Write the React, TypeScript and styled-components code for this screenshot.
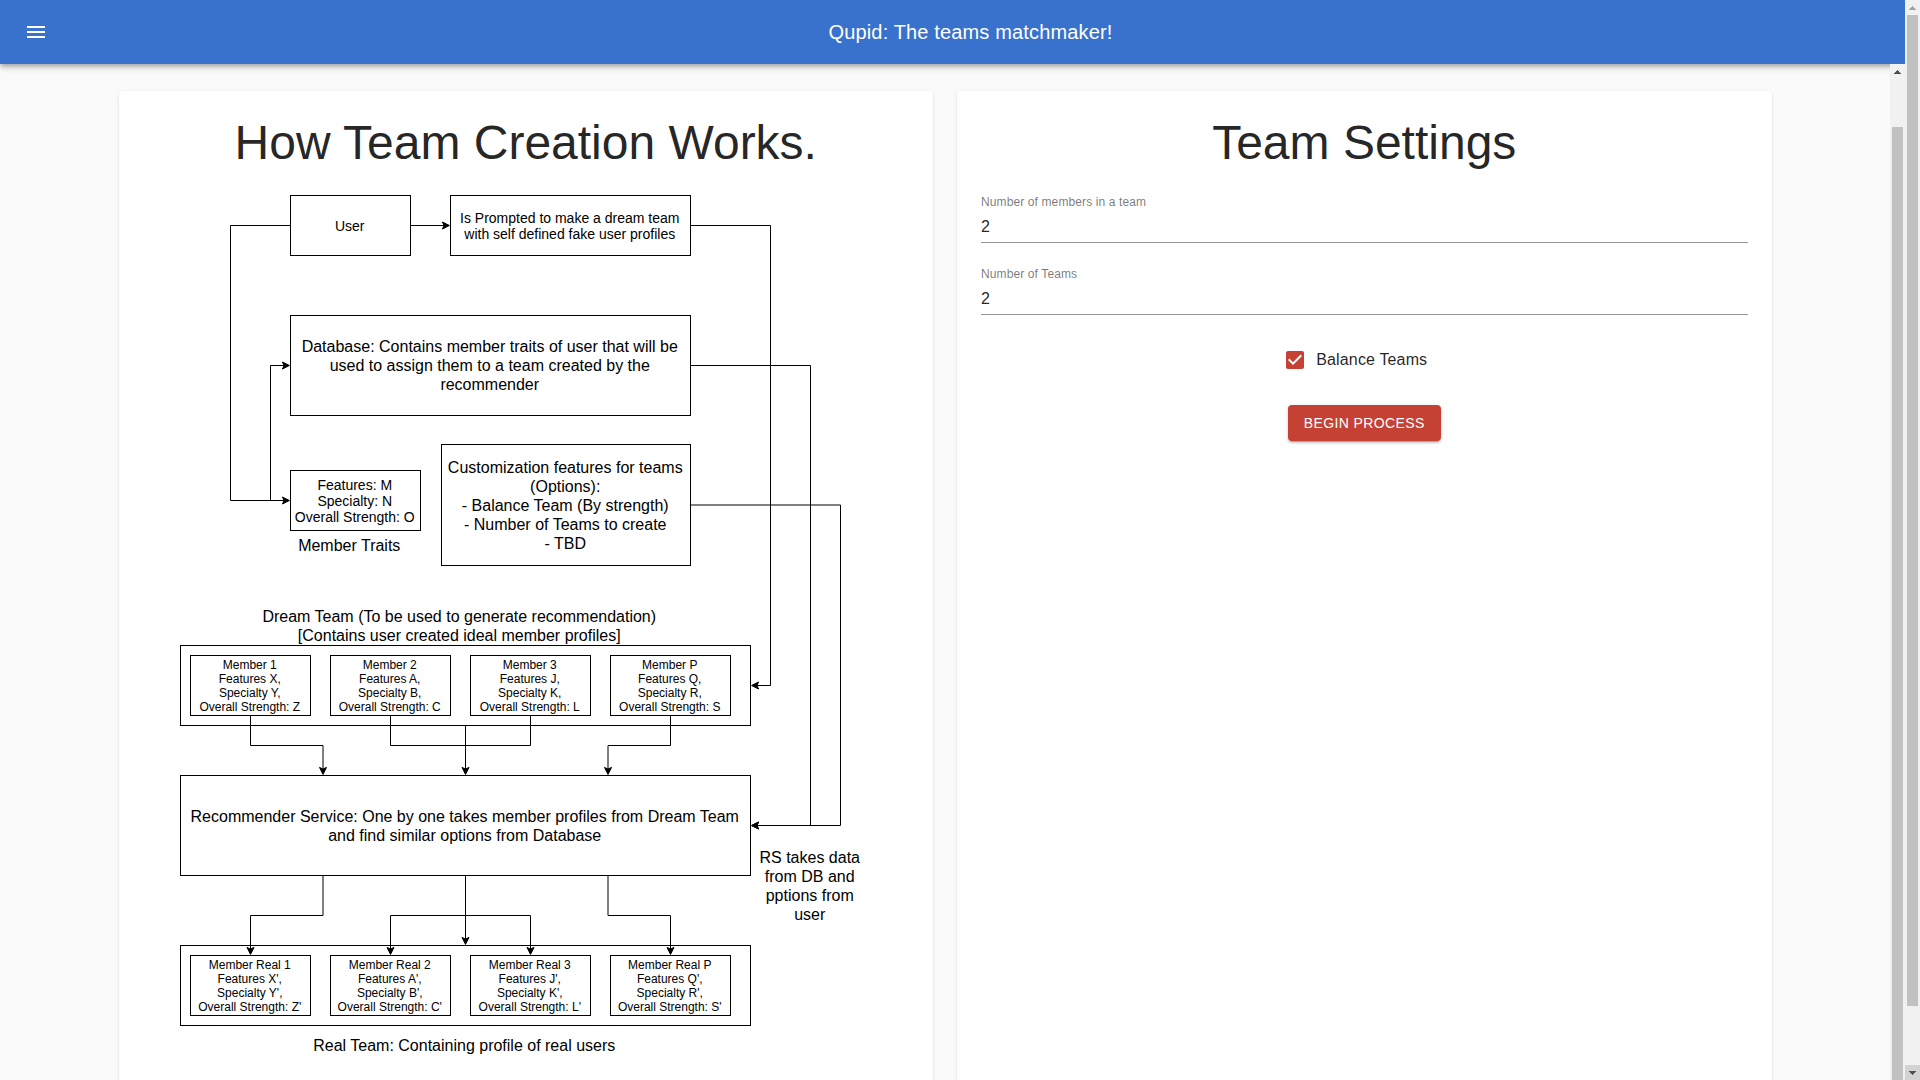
import React, { useState } from "react";
import styled, { createGlobalStyle } from "styled-components";

const GlobalStyle = createGlobalStyle`
  *, *::before, *::after { box-sizing: border-box; }
  body {
    margin: 0;
    background: #fafafa;
    color: rgba(0, 0, 0, 0.87);
    font-family: "Liberation Sans", Arial, sans-serif;
    font-size: 16px;
  }
`;

const Page = styled.div`
  display: flex;
  height: 100vh;
  overflow: hidden;
`;

const Shell = styled.div`
  flex: 1;
  min-width: 0;
  display: flex;
  flex-direction: column;
`;

const AppBar = styled.header`
  position: relative;
  z-index: 1;
  flex: none;
  display: flex;
  align-items: center;
  height: 64px;
  padding: 0 24px 0 12px;
  background: #3872cc;
  color: #fff;
  box-shadow: 0 2px 4px -1px rgba(0, 0, 0, 0.2), 0 4px 5px 0 rgba(0, 0, 0, 0.14),
    0 1px 10px 0 rgba(0, 0, 0, 0.12);
`;

const MenuButton = styled.button`
  display: flex;
  padding: 12px;
  border: 0;
  border-radius: 50%;
  background: transparent;
  color: inherit;
  cursor: pointer;
`;

const AppTitle = styled.h1`
  flex: 1;
  margin: 0;
  font-size: 20px;
  font-weight: 400;
  line-height: 32px;
  letter-spacing: 0.0075em;
  text-align: center;
`;

const Viewport = styled.div`
  flex: 1;
  min-height: 0;
  display: flex;
`;

const Content = styled.main`
  flex: 1;
  min-width: 0;
  overflow: hidden;
`;

const Columns = styled.div`
  display: grid;
  grid-template-columns: repeat(2, minmax(0, 1fr));
  gap: 24px;
  padding: 27px calc(5% + 24px);
`;

const Card = styled.section`
  display: flex;
  flex-direction: column;
  align-items: center;
  gap: 24px;
  padding: 24px;
  border-radius: 4px;
  background: #fff;
  box-shadow: 0 2px 1px -1px rgba(0, 0, 0, 0.2), 0 1px 1px 0 rgba(0, 0, 0, 0.14),
    0 1px 3px 0 rgba(0, 0, 0, 0.12);
`;

const CardTitle = styled.h2`
  margin: 0;
  font-size: 48px;
  font-weight: 400;
  line-height: 56px;
  text-align: center;
`;

/* ---------- settings form ---------- */

const Form = styled.form`
  align-self: stretch;
  display: flex;
  flex-direction: column;
  align-items: center;
  gap: 24px;
`;

const Field = styled.div`
  align-self: stretch;
  display: flex;
  flex-direction: column;
  gap: 2px;
`;

const FieldLabel = styled.label`
  font-size: 12px;
  line-height: 14px;
  letter-spacing: 0.00938em;
  color: rgba(0, 0, 0, 0.54);
`;

const FieldInput = styled.input`
  height: 32px;
  padding: 6px 0;
  border: 0;
  border-bottom: 1px solid rgba(0, 0, 0, 0.42);
  background: none;
  color: inherit;
  font: inherit;
  outline: none;
  appearance: textfield;
  &::-webkit-inner-spin-button {
    appearance: none;
    margin: 0;
  }
`;

const CheckLabel = styled.label`
  display: flex;
  align-items: center;
  margin: 0 16px 0 -11px;
  line-height: 24px;
  letter-spacing: 0.00938em;
  cursor: pointer;
`;

const CheckBox = styled.span`
  display: grid;
  padding: 9px;
  color: #c44133;
  & > * {
    grid-area: 1 / 1;
    width: 24px;
    height: 24px;
    margin: 0;
  }
  & > input {
    opacity: 0;
    cursor: pointer;
  }
`;

const BeginButton = styled.button`
  padding: 6px 16px;
  border: 0;
  border-radius: 4px;
  background: #c44133;
  color: #fff;
  font-family: inherit;
  font-size: 14px;
  line-height: 24px;
  letter-spacing: 0.02857em;
  text-transform: uppercase;
  cursor: pointer;
  box-shadow: 0 3px 1px -2px rgba(0, 0, 0, 0.2), 0 2px 2px 0 rgba(0, 0, 0, 0.14),
    0 1px 5px 0 rgba(0, 0, 0, 0.12);
`;

/* ---------- diagram ---------- */

const Canvas = styled.figure`
  position: relative;
  width: 691px;
  height: 871px;
  margin: 0;
  color: #000;
`;

const Wires = styled.svg`
  position: absolute;
  left: 0;
  top: 0;
  overflow: visible;
`;

type Size = "s" | "m" | "l";
type NodeProps = { $x: number; $y: number; $w: number; $h: number; $size: Size; $plain?: boolean };

const fonts: Record<Size, string> = {
  s: "12px/14px",
  m: "14px/16px",
  l: "16px/19px",
};

const Node = styled.div<NodeProps>`
  position: absolute;
  left: ${(p) => p.$x}px;
  top: ${(p) => p.$y}px;
  width: ${(p) => p.$w}px;
  height: ${(p) => p.$h}px;
  display: flex;
  align-items: center;
  justify-content: center;
  padding-right: 2px;
  border: ${(p) => (p.$plain ? "0" : "1px solid #000")};
  font: ${(p) => fonts[p.$size]} "Liberation Sans", Arial, sans-serif;
  text-align: center;
  white-space: pre;
`;

type Item = { x: number; y: number; w: number; h: number; size: Size; plain?: boolean; text: string };

const column = [10, 150, 290, 430];
const dream = [["1", "X", "Y", "Z"], ["2", "A", "B", "C"], ["3", "J", "K", "L"], ["P", "Q", "R", "S"]];

const items: Item[] = [
  { x: 110, y: 0, w: 121, h: 61, size: "m", text: "User" },
  { x: 270, y: 0, w: 241, h: 61, size: "m", text: "Is Prompted to make a dream team\nwith self defined fake user profiles" },
  { x: 110, y: 120, w: 401, h: 101, size: "l", text: "Database: Contains member traits of user that will be\nused to assign them to a team created by the\nrecommender" },
  { x: 110, y: 275, w: 131, h: 61, size: "m", text: "Features: M\nSpecialty: N\nOverall Strength: O" },
  { x: 261, y: 249, w: 250, h: 122, size: "l", text: "Customization features for teams\n(Options):\n- Balance Team (By strength)\n- Number of Teams to create\n- TBD" },
  { x: 110, y: 340, w: 120, h: 20, size: "l", plain: true, text: "Member Traits" },
  { x: 70, y: 410, w: 420, h: 42, size: "l", plain: true, text: "Dream Team (To be used to generate recommendation)\n[Contains user created ideal member profiles]" },
  { x: 0, y: 450, w: 571, h: 81, size: "l", text: "" },
  ...dream.map(([n, f, s, o], i): Item => ({
    x: column[i], y: 460, w: 121, h: 61, size: "s",
    text: `Member ${n}\nFeatures ${f},\nSpecialty ${s},\nOverall Strength: ${o}`,
  })),
  { x: 0, y: 580, w: 571, h: 101, size: "l", text: "Recommender Service: One by one takes member profiles from Dream Team\nand find similar options from Database" },
  { x: 570, y: 651, w: 121, h: 80, size: "l", plain: true, text: "RS takes data\nfrom DB and\npptions from\nuser" },
  { x: 0, y: 750, w: 571, h: 81, size: "l", text: "" },
  ...dream.map(([n, f, s, o], i): Item => ({
    x: column[i], y: 760, w: 121, h: 61, size: "s",
    text: `Member Real ${n}\nFeatures ${f}',\nSpecialty ${s}',\nOverall Strength: ${o}'`,
  })),
  { x: 0, y: 840, w: 570, h: 20, size: "l", plain: true, text: "Real Team: Containing profile of real users" },
];

const wires: { d: string; arrow?: boolean }[] = [
  { d: "M230.5 30.5H264", arrow: true },
  { d: "M110.5 30.5H50.5V305.5H104", arrow: true },
  { d: "M90.5 305.5V170.5H104", arrow: true },
  { d: "M510.5 30.5H590.5V490.5H577", arrow: true },
  { d: "M510.5 170.5H630.5V630.5H577", arrow: true },
  { d: "M510.5 310H660.5V630.5H577", arrow: true },
  { d: "M70.5 520.5V550.5H143V574", arrow: true },
  { d: "M210.5 520.5V550.5H285.5V574", arrow: true },
  { d: "M350.5 520.5V550.5H285.5V574" },
  { d: "M285.5 530.5V574" },
  { d: "M490.5 520.5V550.5H428V574", arrow: true },
  { d: "M143 680.5V720.5H70.5V754", arrow: true },
  { d: "M285.5 680.5V744", arrow: true },
  { d: "M285.5 720.5H210.5V754", arrow: true },
  { d: "M285.5 720.5H350.5V754", arrow: true },
  { d: "M428 680.5V720.5H490.5V754", arrow: true },
];

const TeamDiagram = () => (
  <Canvas aria-label="Team creation flow">
    {items.map((n, i) => (
      <Node key={i} $x={n.x} $y={n.y} $w={n.w} $h={n.h} $size={n.size} $plain={n.plain}>
        {n.text}
      </Node>
    ))}
    <Wires width="691" height="871" fill="none" stroke="#000" aria-hidden="true">
      <defs>
        <marker id="tip" markerUnits="userSpaceOnUse" markerWidth="12" markerHeight="12" refX="3" refY="6" orient="auto" overflow="visible">
          <path d="M8.4 6L1.4 9.5L3.1 6L1.4 2.5Z" fill="#000" stroke="#000" />
        </marker>
      </defs>
      {wires.map((w) => (
        <path key={w.d} d={w.d} markerEnd={w.arrow ? "url(#tip)" : undefined} />
      ))}
    </Wires>
  </Canvas>
);

/* ---------- scroll bars ---------- */

const Bar = styled.div`
  position: relative;
  z-index: 2;
  flex: none;
  display: flex;
  flex-direction: column;
  width: 15px;
  background: #f1f1f1;
`;

const BarEnd = styled.div<{ $color: string; $active?: boolean }>`
  flex: none;
  display: grid;
  place-items: center;
  height: 15px;
  color: ${(p) => p.$color};
  background: ${(p) => (p.$active ? "#d2d2d2" : "transparent")};
`;

const Track = styled.div<{ $start?: string }>`
  flex: 1;
  min-height: 0;
  padding: ${(p) => p.$start ?? "0"} 2px 0;
`;

const Thumb = styled.div<{ $length: string }>`
  height: ${(p) => p.$length};
  background: #c1c1c1;
`;

const Arrow = ({ down }: { down?: boolean }) => (
  <svg width="7" height="4" viewBox="0 0 7 4" fill="currentColor" shapeRendering="crispEdges">
    <path d={down ? "M0 0h7v1h-1v1h-1v1h-1v1h-1v-1h-1v-1h-1v-1h-1z" : "M3 0h1v1h1v1h1v1h1v1h-7v-1h1v-1h1v-1h1z"} />
  </svg>
);

export default function App() {
  const [members, setMembers] = useState("2");
  const [teams, setTeams] = useState("2");
  const [balance, setBalance] = useState(true);

  return (
    <Page>
      <GlobalStyle />
      <Shell>
        <AppBar>
          <MenuButton type="button" aria-label="Open menu">
            <svg width="24" height="24" viewBox="0 0 24 24" fill="currentColor">
              <path d="M3 18h18v-2H3v2zm0-5h18v-2H3v2zm0-7v2h18V6H3z" />
            </svg>
          </MenuButton>
          <AppTitle>Qupid: The teams matchmaker!</AppTitle>
        </AppBar>
        <Viewport>
          <Content>
            <Columns>
              <Card>
                <CardTitle>How Team Creation Works.</CardTitle>
                <TeamDiagram />
              </Card>
              <Card>
                <CardTitle>Team Settings</CardTitle>
                <Form onSubmit={(e) => e.preventDefault()}>
                  <Field>
                    <FieldLabel htmlFor="members">Number of members in a team</FieldLabel>
                    <FieldInput id="members" type="number" value={members} onChange={(e) => setMembers(e.target.value)} />
                  </Field>
                  <Field>
                    <FieldLabel htmlFor="teams">Number of Teams</FieldLabel>
                    <FieldInput id="teams" type="number" value={teams} onChange={(e) => setTeams(e.target.value)} />
                  </Field>
                  <CheckLabel>
                    <CheckBox>
                      <svg viewBox="0 0 24 24" fill="currentColor" aria-hidden="true">
                        <path
                          d={
                            balance
                              ? "M19 3H5c-1.11 0-2 .9-2 2v14c0 1.1.89 2 2 2h14c1.11 0 2-.9 2-2V5c0-1.1-.89-2-2-2zm-9 14l-5-5 1.41-1.41L10 14.17l7.59-7.59L19 8l-9 9z"
                              : "M19 5v14H5V5h14m0-2H5c-1.1 0-2 .9-2 2v14c0 1.1.9 2 2 2h14c1.1 0 2-.9 2-2V5c0-1.1-.9-2-2-2z"
                          }
                        />
                      </svg>
                      <input type="checkbox" checked={balance} onChange={(e) => setBalance(e.target.checked)} />
                    </CheckBox>
                    Balance Teams
                  </CheckLabel>
                  <BeginButton type="submit">Begin Process</BeginButton>
                </Form>
              </Card>
            </Columns>
          </Content>
          <Bar aria-hidden="true">
            <BarEnd $color="#505050">
              <Arrow />
            </BarEnd>
            <Track $start="48px">
              <Thumb $length="100%" />
            </Track>
          </Bar>
        </Viewport>
      </Shell>
      <Bar aria-hidden="true">
        <BarEnd $color="#a3a3a3">
          <Arrow />
        </BarEnd>
        <Track>
          <Thumb $length="94.4%" />
        </Track>
        <BarEnd $color="#505050" $active>
          <Arrow down />
        </BarEnd>
      </Bar>
    </Page>
  );
}
